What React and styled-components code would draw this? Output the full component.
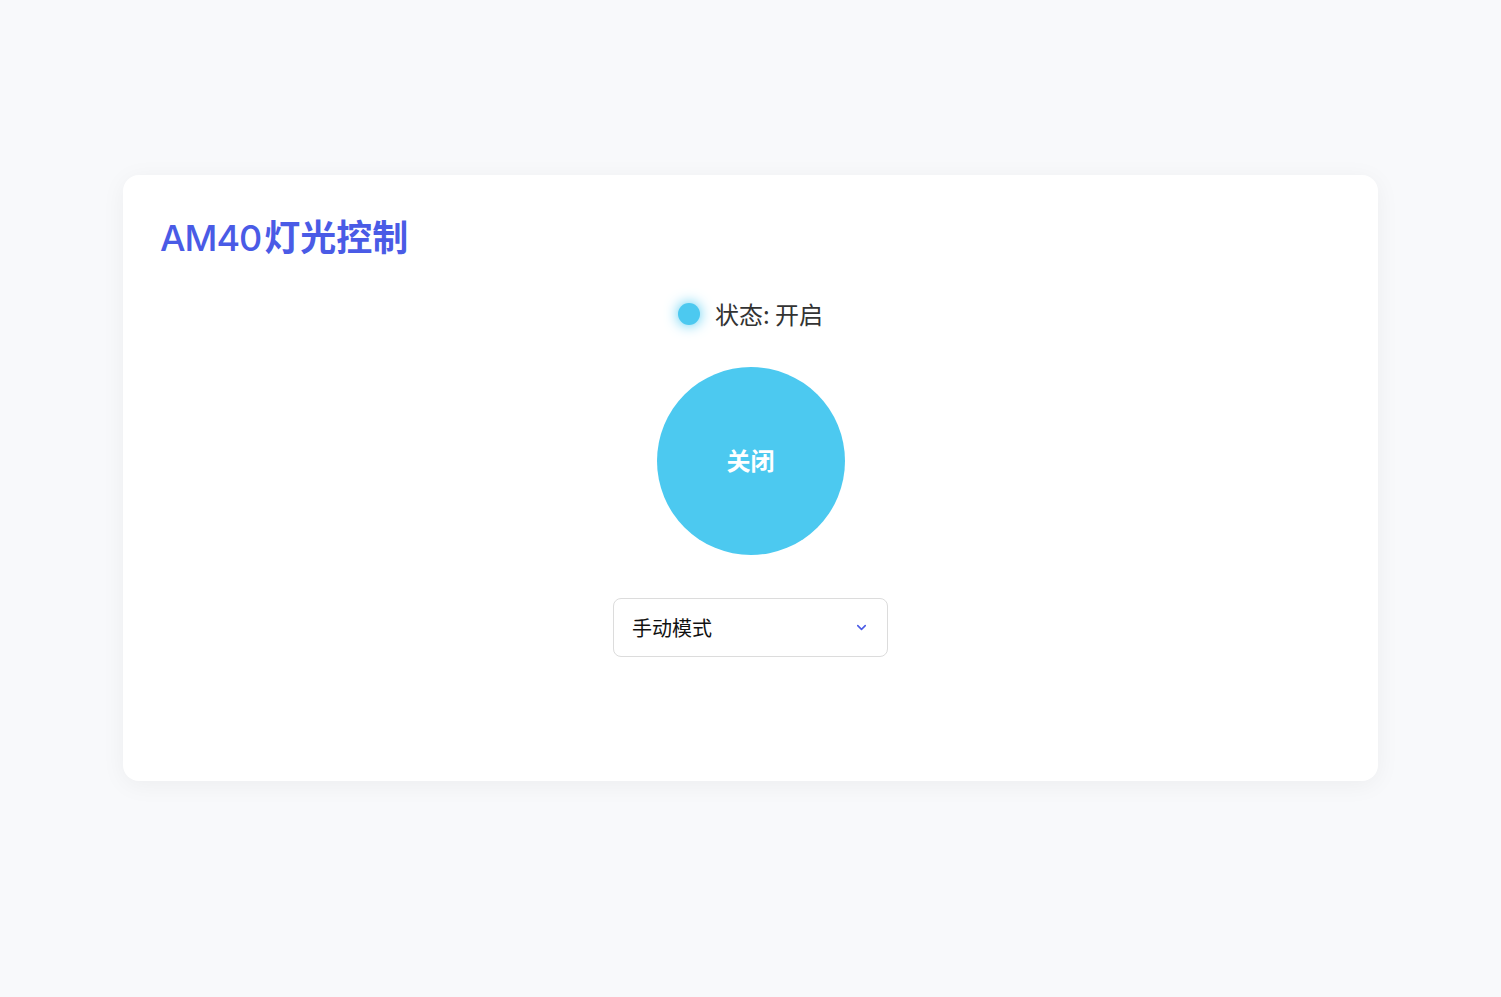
import React, { useState } from "react";
import styled, { createGlobalStyle } from "styled-components";

const Global = createGlobalStyle`
  html, body { margin: 0; padding: 0; background: #f8f9fb; }
  body { font-family: Inter, "Noto Sans CJK SC", sans-serif; }
  * { box-sizing: border-box; }
`;

const Page = styled.div`
  min-height: 997px;
  padding-top: 175px;
  display: flex;
  justify-content: center;
  align-items: flex-start;
`;

const Card = styled.div`
  width: 1255px;
  height: 606px;
  background: #ffffff;
  border-radius: 16px;
  box-shadow: 0 4px 24px rgba(0, 0, 0, 0.05);
  padding: 37px;
  display: flex;
  flex-direction: column;
`;

const Title = styled.h1`
  margin: 0;
  font-size: 36px;
  line-height: 52px;
  font-weight: 700;
  color: #4a5be6;
  font-family: Inter, "Noto Sans CJK SC", sans-serif;
`;

const Model = styled.span`
  font-weight: 500;
  letter-spacing: -1px;
  margin-right: 3px;
`;

const Body = styled.div`
  display: flex;
  flex-direction: column;
  align-items: center;
  margin-top: 32px;
`;

const Status = styled.div`
  display: flex;
  align-items: center;
  gap: 15px;
  font-size: 24px;
  color: #333;
  font-family: "Noto Sans CJK SC", sans-serif;
`;

const Dot = styled.span`
  width: 22px;
  height: 22px;
  border-radius: 50%;
  background: ${(p) => (p.$on ? "#4cc9f0" : "#ccc")};
  box-shadow: ${(p) => (p.$on ? "0 0 14px #4cc9f0" : "none")};
`;

const Toggle = styled.button`
  margin-top: 36px;
  width: 188px;
  height: 188px;
  border-radius: 50%;
  border: none;
  padding: 0 0 4px;
  background: #4cc9f0;
  color: #fff;
  font-size: 24px;
  font-weight: 700;
  font-family: "Noto Sans CJK SC", sans-serif;
  cursor: pointer;
`;

const SelectBox = styled.div`
  margin-top: 43px;
  width: 275px;
  height: 59px;
  border: 1px solid #dcdcdc;
  border-radius: 8px;
  display: flex;
  align-items: center;
  justify-content: space-between;
  padding: 0 18px;
  font-size: 20px;
  color: #111;
  font-family: "Noto Sans CJK SC", sans-serif;
`;

export default function App() {
  const [on] = useState(true);
  return (
    <>
      <Global />
      <Page>
        <Card>
          <Title>
            <Model>AM40</Model>灯光控制
          </Title>
          <Body>
            <Status>
              <Dot $on={on} />
              <span>状态: 开启</span>
            </Status>
            <Toggle>关闭</Toggle>
            <SelectBox>
              <span>手动模式</span>
              <svg width="15" height="15" viewBox="0 0 24 24" fill="none" stroke="#4a5be6" strokeWidth="2.5" strokeLinecap="round" strokeLinejoin="round">
                <path d="M6 9l6 6 6-6" />
              </svg>
            </SelectBox>
          </Body>
        </Card>
      </Page>
    </>
  );
}
